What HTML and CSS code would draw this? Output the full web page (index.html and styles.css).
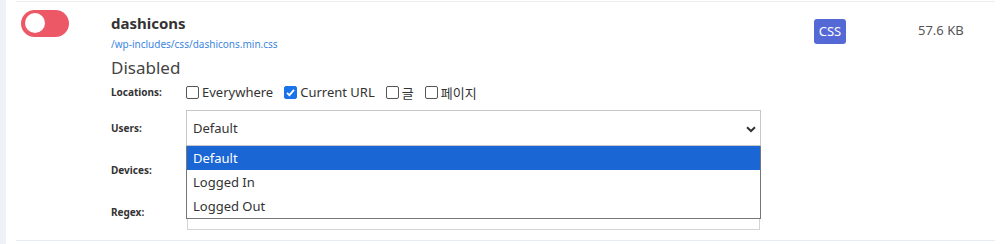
FILE: index.html
```html
<!DOCTYPE html>
<html>
<head>
<meta charset="utf-8">
<link rel="stylesheet" href="styles.css">
</head>
<body>
<div class="page">
  <div class="side"></div>
  <div class="main">
    <div class="row">
      <div class="toggle-col">
        <div class="toggle"><span class="knob"></span></div>
      </div>
      <div class="content">
        <div class="title">dashicons</div>
        <a class="path">/wp-includes/css/dashicons.min.css</a>
        <div class="status">Disabled</div>
        <div class="field locs">
          <div class="label">Locations:</div>
          <div class="checks">
            <label class="chk"><span class="box"></span>Everywhere</label>
            <label class="chk"><span class="box on"><svg viewBox="0 0 13 13" width="13" height="13"><path d="M3 6.8 L5.4 9.2 L10 3.9" fill="none" stroke="#fff" stroke-width="1.8"/></svg></span>Current URL</label>
            <label class="chk"><span class="box"></span>글</label>
            <label class="chk"><span class="box"></span>페이지</label>
          </div>
        </div>
        <div class="field">
          <div class="label">Users:</div>
          <div class="control">
            <div class="select">Default
              <svg class="chev" viewBox="0 0 10 7" width="10" height="7"><path d="M1 1.2 L5 5 L9 1.2" fill="none" stroke="#333" stroke-width="2"/></svg>
            </div>
            <ul class="dropdown">
              <li class="sel">Default</li>
              <li>Logged In</li>
              <li>Logged Out</li>
            </ul>
          </div>
        </div>
        <div class="field">
          <div class="label">Devices:</div>
          <div class="control"><div class="input"></div></div>
        </div>
        <div class="field">
          <div class="label">Regex:</div>
          <div class="control"><div class="input"></div></div>
        </div>
      </div>
      <div class="type-col"><span class="badge">CSS</span></div>
      <div class="size-col">57.6 KB</div>
    </div>
  </div>
</div>
</body>
</html>
```

FILE: styles.css
```css
* { box-sizing: border-box; }
html, body { margin: 0; padding: 0; background: #fff; }
body { font-family: "Noto Sans", "Noto Sans CJK KR", sans-serif; color: #333; width: 1006px; height: 244px; overflow: hidden; }
.page { display: flex; height: 244px; }
.side { width: 6px; background: #eef1f5; flex: none; }
.main { flex: 1; padding: 1px 11px 0 10px; }
.row {
  display: flex;
  border-top: 1px solid #eeeeee;
  border-bottom: 1px solid #e8edf3;
  height: 240px;
}
.toggle-col { width: 95px; padding: 8px 0 0 5px; flex: none; }
.toggle { width: 48px; height: 27px; border-radius: 14px; background: #ec5866; position: relative; }
.knob { position: absolute; left: 4px; top: 3px; width: 20px; height: 20px; border-radius: 50%; background: #fff; }
.content { width: 650px; flex: none; padding-top: 11px; }
.title { font-size: 15px; font-weight: 700; color: #333; line-height: 20px; }
.path { display: block; font-size: 10px; color: #3b86e0; line-height: 14px; margin-top: 4px; }
.status { font-size: 17px; color: #444; line-height: 22px; margin-top: 6px; }
.field { display: flex; align-items: center; margin-bottom: 6px; }
.field.locs { margin-top: 3px; margin-bottom: 8px; height: 20px; }
.label { width: 75px; flex: none; font-size: 10px; font-weight: 700; color: #333; }
.checks { display: flex; gap: 11px; font-size: 13px; color: #333; }
.chk { display: flex; align-items: center; gap: 3px; }
.box { width: 13px; height: 13px; border: 1px solid #555; border-radius: 2px; display: inline-flex; }
.box.on { background: #1a73e8; border-color: #1a73e8; }
.box.on svg { margin: -1px; }
.control { position: relative; width: 575px; }
.select { height: 36px; border: 1px solid #c7c7c7; display: flex; align-items: center; padding-left: 6px; font-size: 13px; color: #333; position: relative; }
.chev { position: absolute; right: 4px; top: 15px; }
.input { height: 36px; border: 1px solid #d4d4d4; margin: 0 1px; }
.dropdown { position: absolute; left: 0; top: 36px; width: 575px; margin: 0; padding: 0; list-style: none; background: #fff; border: 1px solid #767676; border-top: none; z-index: 5; }
.dropdown li { height: 24px; line-height: 24px; padding-left: 6px; font-size: 13px; color: #333; }
.dropdown li.sel { background: #1a66d4; color: #fff; }
.type-col { width: 104px; flex: none; padding: 17px 0 0 53px; }
.badge { display: inline-block; width: 32px; height: 25px; line-height: 25px; text-align: center; background: #5468d6; color: #fff; border-radius: 3px; font-size: 13px; }
.size-col { padding: 19px 0 0 53px; font-size: 13px; color: #555; }
```
